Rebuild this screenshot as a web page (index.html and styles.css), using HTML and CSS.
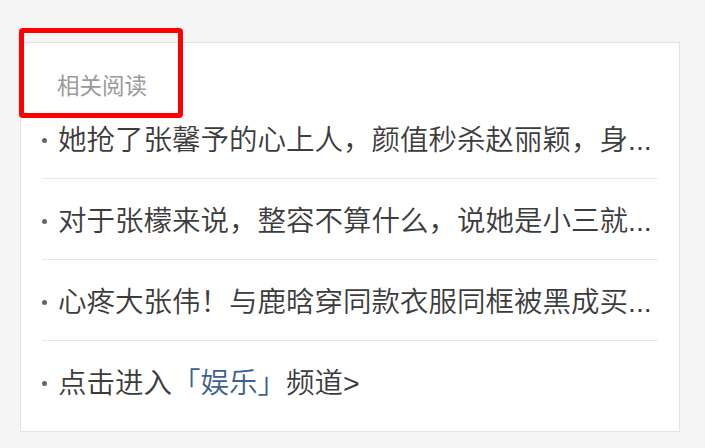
FILE: index.html
```html
<!DOCTYPE html>
<html lang="zh-CN">
<head>
    <meta charset="UTF-8">
    <title>相关阅读</title>
    <link rel="stylesheet" href="styles.css">
</head>
<body>
    <!-- Related reading card -->
    <div class="card">
        <h2 class="card-title">相关阅读</h2>
        <ul class="news-list">
            <li class="news-item">
                <span class="dot"></span>
                <span class="news-text">她抢了张馨予的心上人，颜值秒杀赵丽颖，身...</span>
            </li>
            <li class="news-item">
                <span class="dot"></span>
                <span class="news-text">对于张檬来说，整容不算什么，说她是小三就...</span>
            </li>
            <li class="news-item">
                <span class="dot"></span>
                <span class="news-text">心疼大张伟！与鹿晗穿同款衣服同框被黑成买...</span>
            </li>
            <li class="news-item">
                <span class="dot"></span>
                <span class="news-text">点击进入<a class="channel" href="#">「娱乐」</a>频道&gt;</span>
            </li>
        </ul>
    </div>

    <!-- Highlight frame over the title -->
    <div class="highlight"></div>
</body>
</html>
```

FILE: styles.css
```css
body {
    font-family: "Liberation Sans", "Noto Sans CJK SC", sans-serif;
    margin: 0;
    padding: 42px 25px 0 20px;
    background-color: #f5f5f5;
    position: relative;
}

.card {
    width: 660px;
    background-color: #fff;
    border: 1px solid #e3e3e3;
    padding: 0 21px 10px 21px;
    box-sizing: border-box;
}

.card-title {
    margin: 0;
    padding: 32px 0 0 15px;
    height: 23px;
    font-size: 22.5px;
    line-height: 24px;
    font-weight: normal;
    color: #9a9a9a;
}

.news-list {
    list-style: none;
    margin: 0;
    padding: 0;
}

.news-item {
    display: flex;
    align-items: center;
    height: 76px;
    padding-top: 4px;
    border-bottom: 1px solid #e6e6e6;
}

.news-item:last-child {
    border-bottom: none;
}

.dot {
    width: 5px;
    height: 5px;
    border-radius: 50%;
    background-color: #666;
    margin-right: 11px;
    flex-shrink: 0;
}

.news-text {
    flex: 1;
    min-width: 0;
    font-size: 28.5px;
    line-height: 36px;
    font-weight: 350;
    color: #3c3c3c;
    white-space: nowrap;
}

.channel {
    color: #3d5f91;
    text-decoration: none;
}

/* Red annotation frame */
.highlight {
    position: absolute;
    left: 19px;
    top: 28px;
    width: 154px;
    height: 80px;
    border: 5px solid #ff0000;
    border-radius: 4px;
}
```
